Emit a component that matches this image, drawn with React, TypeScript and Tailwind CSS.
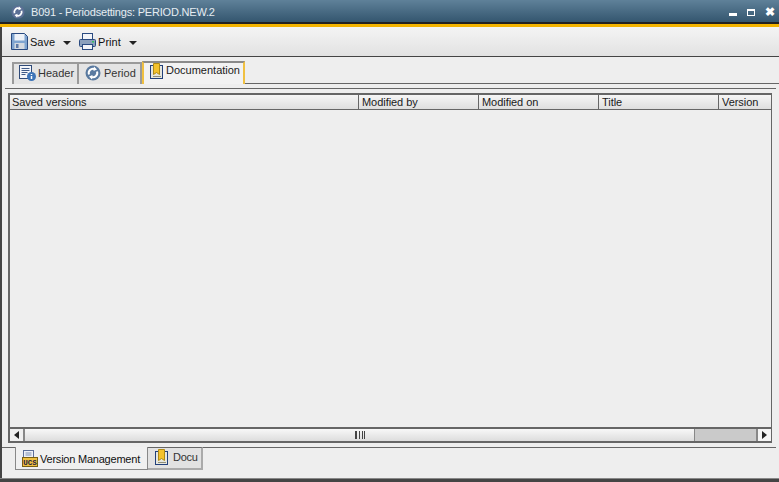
const COLUMNS = [
  { label: 'Saved versions', width: 'w-[349px] pl-[2px]' },
  { label: 'Modified by', width: 'w-[120px] pl-[3px]' },
  { label: 'Modified on', width: 'w-[120px] pl-[3px]' },
  { label: 'Title', width: 'w-[120px] pl-[3px]' },
  { label: 'Version', width: 'flex-1 pl-[3px]' },
];

function PeriodIcon({ size, fill }: { size: number; fill: string }) {
  return (
    <svg width={size} height={size} viewBox="0 0 16 16" className="shrink-0">
      <circle cx="8" cy="8" r="7.5" fill={fill} />
      <path d="M4 9.5A4.3 4.3 0 0 1 9.5 4" fill="none" stroke="#ffffff" strokeWidth="2" />
      <path d="M12 6.5A4.3 4.3 0 0 1 6.5 12" fill="none" stroke="#ffffff" strokeWidth="2" />
      <path d="M9 1.5l3 3-3.5 1.5zM7 14.5l-3-3 3.5-1.5z" fill="#ffffff" />
    </svg>
  );
}

function BookIcon() {
  return (
    <svg width="14" height="16" viewBox="0 0 14 16" className="shrink-0">
      <rect x="0.5" y="2.5" width="12" height="13" fill="#e6e6de" stroke="#22407a" />
      <path d="M3.5 0.5h6v11l-3-2-3 2z" fill="#f4c22c" stroke="#b08a14" />
      <path d="M3 13.5h8" stroke="#8f8f7a" />
    </svg>
  );
}

function HeaderIcon() {
  return (
    <svg width="18" height="18" viewBox="0 0 18 18" className="shrink-0">
      <rect x="0.5" y="1.5" width="12" height="13" fill="#f4f6fa" stroke="#2f4a78" />
      <path d="M2.5 4.5h8M2.5 6.5h8M2.5 8.5h6M2.5 10.5h4" stroke="#3f5a88" />
      <circle cx="12.5" cy="12.5" r="4.5" fill="#3d74b8" />
      <path d="M12.5 10v1M12.5 12v3" stroke="#ffffff" strokeWidth="1.5" />
    </svg>
  );
}

function SaveIcon() {
  return (
    <svg width="17" height="17" viewBox="0 0 17 17" className="shrink-0">
      <path d="M0.5 0.5h13l3 3v13H0.5z" fill="#7fa4d0" stroke="#2a4a80" />
      <rect x="3.5" y="1" width="10" height="6.5" fill="#eef2f8" />
      <rect x="3.5" y="10" width="10" height="6" fill="#d4d9e0" />
      <rect x="5" y="11" width="2.5" height="4" fill="#5d7aa8" />
    </svg>
  );
}

function PrintIcon() {
  return (
    <svg width="17" height="17" viewBox="0 0 17 17" className="shrink-0">
      <rect x="3.5" y="0.5" width="10" height="7" fill="#f2f4f8" stroke="#2a4a80" />
      <rect x="0.5" y="6.5" width="16" height="7" rx="1" fill="#8ba0bc" stroke="#2a4a80" />
      <rect x="3.5" y="11.5" width="10" height="5" fill="#f2f4f8" stroke="#2a4a80" />
      <rect x="13" y="8" width="2" height="1.5" fill="#38c060" />
    </svg>
  );
}

function VcsIcon() {
  return (
    <svg width="16" height="17" viewBox="0 0 16 17" className="shrink-0">
      <rect x="1.5" y="0.5" width="10" height="9" fill="#eef0f6" stroke="#5d6f98" />
      <path d="M3.5 3h6M3.5 5h6" stroke="#7d8fb0" />
      <rect x="0.5" y="7.5" width="15" height="9" fill="#f0c040" stroke="#7a6010" />
      <text x="8" y="15" textAnchor="middle" fontSize="7.5" fontFamily="Liberation Mono, monospace" fontWeight="700" fill="#1a1a40">
        UCS
      </text>
    </svg>
  );
}

function TriangleDown() {
  return <span className="w-0 h-0 border-x-[4px] border-x-transparent border-t-[4px] border-t-[#222222]" />;
}

function ToolbarButton({ icon, label }: { icon: React.ReactNode; label: string }) {
  return (
    <div className="flex items-center">
      {icon}
      <span className="ml-[2px] mt-[1px] text-[#111111]">{label}</span>
      <span className="ml-[8px] mt-[2px] flex">
        <TriangleDown />
      </span>
    </div>
  );
}

export default function App() {
  return (
    <div className="font-['Liberation_Sans',sans-serif] text-[11px] w-[779px] h-[482px] flex flex-col overflow-hidden bg-[#eeeeee] text-[#1a1a1a]">
      {/* title bar */}
      <div className="h-[22px] shrink-0 flex items-center pl-[11px] pr-[4px] pt-[2px] bg-gradient-to-b from-[#5f8199] to-[#34566f] text-[#e6edf2]">
        <PeriodIcon size={14} fill="#5b6f95" />
        <span className="ml-[6px] tracking-[-0.2px]">B091 - Periodsettings: PERIOD.NEW.2</span>
        <div className="ml-auto flex items-center gap-[10px]">
          <span className="w-[8px] h-[3px] mt-[5px] bg-white" />
          <span className="w-[8px] h-[7px] border border-t-2 border-white" />
          <span className="w-[10px] text-center text-white text-[12px] font-bold leading-none">✖</span>
        </div>
      </div>
      <div className="h-[2px] shrink-0 bg-[#222222]" />
      <div className="h-[3px] shrink-0 bg-[#f4b400]" />

      {/* toolbar */}
      <div className="h-[29px] shrink-0 flex items-center pl-[9px] gap-[8px] border-l-2 border-[#444444] bg-gradient-to-b from-[#f4f4f4] to-[#e2e2e2]">
        <ToolbarButton icon={<SaveIcon />} label="Save" />
        <ToolbarButton icon={<PrintIcon />} label="Print" />
      </div>
      <div className="h-[1px] shrink-0 bg-[#444444]" />

      <div className="flex-1 min-h-0 flex flex-col border-l-2 border-[#444444]">
        {/* top tabs */}
        <div className="h-[27px] shrink-0 pl-[10px] flex items-end">
          <div className="h-[22px] w-[67px] flex items-center gap-[1px] pl-[5px] pb-[2px] border-2 border-b-0 border-[#9a9a9a] bg-[#e4e4e4] text-[#333333]">
            <HeaderIcon />
            <span>Header</span>
          </div>
          <div className="h-[22px] w-[63px] flex items-center gap-[3px] pl-[6px] pb-[2px] border-2 border-l-0 border-b-0 border-[#9a9a9a] bg-[#e4e4e4] text-[#333333]">
            <PeriodIcon size={16} fill="#5a7aa0" />
            <span>Period</span>
          </div>
          <div className="h-[23px] w-[103px] flex items-start gap-[2px] pl-[6px] border-2 border-b-0 border-[#8a8a8a] border-l-[#f0c040] border-r-[#f0c040] bg-[#f2f2f2]">
            <BookIcon />
            <span className="-mt-[1px]">Documentation</span>
          </div>
          <div className="flex-1 h-[1px] bg-[#666666]" />
        </div>

        {/* grid */}
        <div className="h-[359px] shrink-0 pl-[3px] pr-[3px] pt-[4px] flex flex-col">
          <div className="h-[1px] shrink-0 bg-[#666666]" />
          <div className="pt-[4px] pl-[3px]">
            <div className="h-[350px] w-[764px] flex flex-col border-2 border-[#666666] border-r">
              <div className="h-[15px] shrink-0 flex border-b border-[#666666] bg-gradient-to-b from-[#f6f6f6] to-[#dedede]">
                {COLUMNS.map((col, i) => (
                  <div
                    key={col.label}
                    className={`${col.width} leading-[14px] tracking-[-0.05px] ${i < COLUMNS.length - 1 ? 'border-r border-[#666666]' : ''}`}
                  >
                    {col.label}
                  </div>
                ))}
              </div>
              <div className="flex-1 min-h-0 bg-[#eeeeee]" />
              {/* horizontal scrollbar */}
              <div className="h-[14px] shrink-0 flex border-t-2 border-[#666666]">
                <div className="w-[15px] flex items-center justify-center border-r-2 border-[#888888] bg-[#f0f0f0]">
                  <span className="w-0 h-0 border-y-[4px] border-y-transparent border-r-[5px] border-r-[#222222]" />
                </div>
                <div className="w-[670px] flex items-center justify-center bg-gradient-to-b from-[#f8f8f8] to-[#dddddd] border-r border-[#888888]">
                  <span className="w-[10px] h-[8px] border-x border-[#444444] bg-[repeating-linear-gradient(90deg,#444444_0,#444444_1px,transparent_1px,transparent_3px)]" />
                </div>
                <div className="flex-1 bg-[#cacaca]" />
                <div className="w-[15px] flex items-center justify-center border-l-2 border-[#888888] bg-[#f4f4f4]">
                  <span className="w-0 h-0 border-y-[4px] border-y-transparent border-l-[5px] border-l-[#222222]" />
                </div>
              </div>
            </div>
          </div>
        </div>

        {/* bottom tabs */}
        <div className="flex-1 min-h-0 pt-[4px] pr-[3px] flex items-start">
          <div className="w-[13px] h-[1px] bg-[#666666]" />
          <div className="h-[23px] w-[133px] flex items-center gap-[2px] pl-[6px] border border-t-0 border-[#888888] bg-[#f0f0f0]">
            <VcsIcon />
            <span className="mt-[2px] tracking-[-0.22px] text-[#111111]">Version Management</span>
          </div>
          <div className="h-[23px] w-[55px] flex items-center gap-[4px] pl-[7px] pb-[2px] border-2 border-l-0 border-[#aaaaaa] border-t-[#666666] border-t bg-[#e2e2e2] text-[#333333]">
            <BookIcon />
            <span className="tracking-[-0.3px]">Docu</span>
          </div>
          <div className="flex-1 h-[1px] bg-[#666666]" />
        </div>
      </div>
      <div className="h-[1px] shrink-0 bg-[#888888]" />
      <div className="h-[3px] shrink-0 bg-[#444444]" />
    </div>
  );
}
